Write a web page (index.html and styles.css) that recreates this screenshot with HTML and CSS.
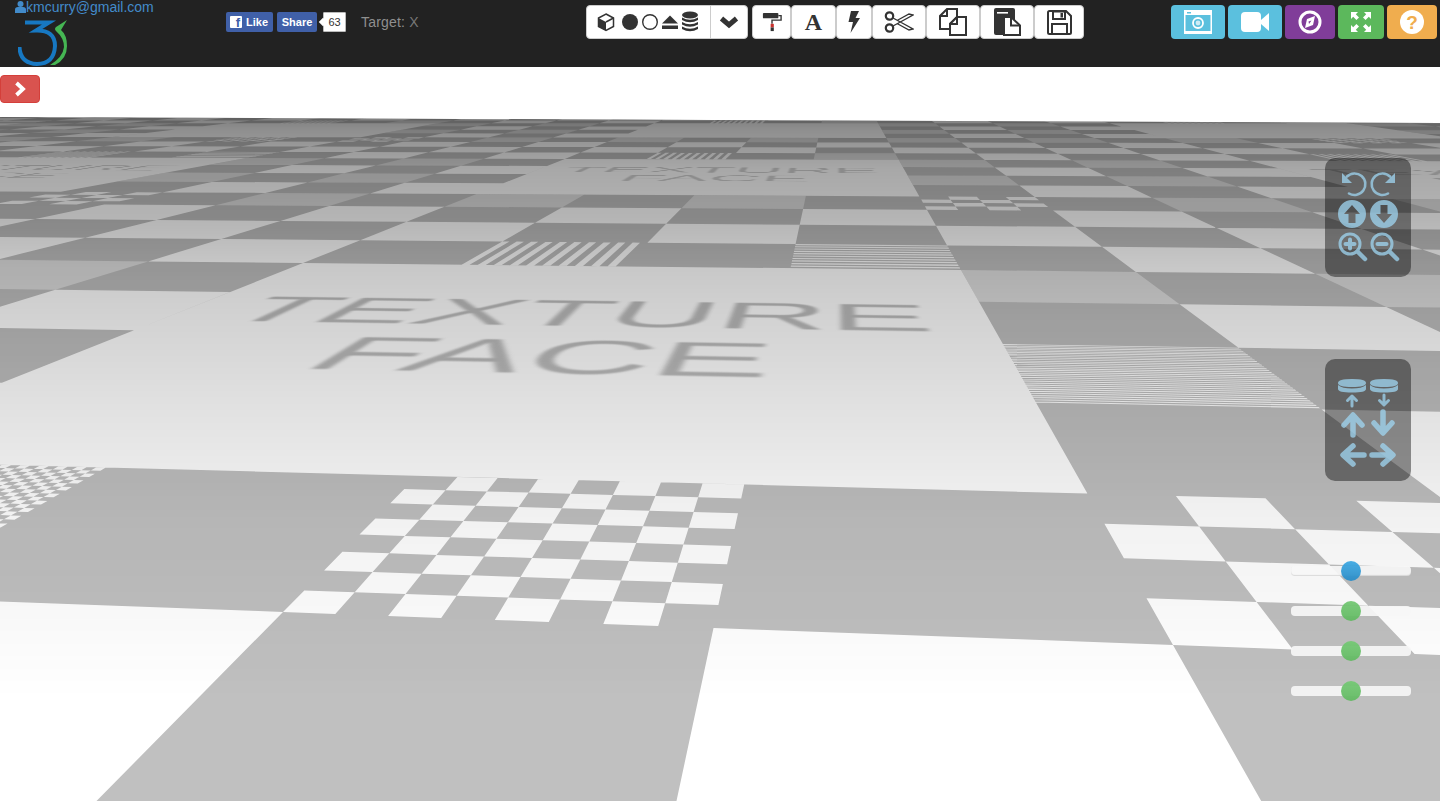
FILE: index.html
```html
<!DOCTYPE html>
<html>
<head>
    <title>Texture Face</title>
    <link rel="stylesheet" href="styles.css">
</head>
<body>
    <header class="topbar">
        <div class="user">
            <a class="email">
                <svg class="person" width="11" height="12" viewBox="0 0 11 12"><circle cx="5.5" cy="3" r="3"/><path d="M0 12V8.5Q0 6 3 6H8Q11 6 11 8.5V12Z"/></svg>kmcurry@gmail.com
            </a>
            <svg class="logo" width="52" height="46" viewBox="0 0 52 46">
                <path d="M7 2.500H31L18 10.500Q37 10 37 26Q36 44 19 44Q2 43 1.500 27" fill="none" stroke="#1778c2" stroke-width="4"/>
                <path d="M49 0L38 7Q36 9 38 11Q46 18 46 27Q45 37 32 45L37 45Q49 39 49 26Q49 15 43 10Z" fill="#45b653"/>
            </svg>
        </div>
        <div class="fb">
            <span class="fb-btn like"><span class="f-logo">f</span>Like</span>
            <span class="fb-btn share">Share</span>
            <span class="fb-count">63</span>
        </div>
        <div class="target">Target: <span>X</span></div>

        <div class="toolbar">
            <div class="tool-group">
                <div class="tool shapes">
                    <svg width="20" height="20" viewBox="0 0 20 20"><path d="M10 2L17.5 6V14.5L10 18.5L2.500 14.5V6Z" fill="none" stroke="#333" stroke-width="1.500"/><path d="M2.500 6L10 10V18.500L2.500 14.5Z" fill="#333"/><path d="M10 10L17.500 6" stroke="#333" stroke-width="1.500"/></svg>
                    <svg class="after-cube" width="20" height="20" viewBox="0 0 20 20"><circle cx="10" cy="10" r="8" fill="#333"/></svg>
                    <svg width="20" height="20" viewBox="0 0 20 20"><circle cx="10" cy="10" r="7.300" fill="none" stroke="#333" stroke-width="1.400"/></svg>
                    <svg width="20" height="20" viewBox="0 0 20 20"><path d="M10 3.500L18 11.500H2Z" fill="#333"/><rect x="2" y="13.500" width="16" height="3.500" fill="#333"/></svg>
                    <svg width="20" height="22" viewBox="0 0 20 22"><ellipse cx="10" cy="4" rx="8" ry="3.500" fill="#333"/><path d="M2 6.500Q10 11 18 6.500V9Q10 13.500 2 9ZM2 11Q10 15.500 18 11V13.500Q10 18 2 13.500ZM2 15.500Q10 20 18 15.500V18Q10 22.500 2 18Z" fill="#333"/></svg>
                </div>
                <div class="tool chevron">
                    <svg width="20" height="14" viewBox="0 0 20 14"><path d="M2.500 3.500L10 10L17.500 3.500" fill="none" stroke="#333" stroke-width="5"/></svg>
                </div>
            </div>
            <div class="tool w-brush">
                <svg width="20" height="20" viewBox="0 0 22 22"><rect x="1" y="1" width="17" height="6" rx="1" fill="#333"/><path d="M18 4H21V9H11V13" fill="none" stroke="#333" stroke-width="1.500"/><rect x="9.500" y="13" width="3.500" height="4" fill="#c9302c"/><rect x="9.500" y="17" width="3.500" height="4" fill="#333"/></svg>
            </div>
            <div class="tool w-font"><span class="letter">A</span></div>
            <div class="tool w-bolt">
                <svg width="14" height="22" viewBox="0 0 14 22"><path d="M4 0H12L8.500 7H13L3.500 22L6 11H1.500Z" fill="#333"/></svg>
            </div>
            <div class="tool w-wide">
                <svg width="30" height="22" viewBox="0 0 30 22"><circle cx="5.500" cy="5" r="3.700" fill="none" stroke="#333" stroke-width="2.200"/><circle cx="5.500" cy="17" r="3.700" fill="none" stroke="#333" stroke-width="2.200"/><path d="M9 7L29 18L25 19L13 12.500M9 15L29 4L25 3L13 9.500" fill="#fff" stroke="#333" stroke-width="1.300"/></svg>
            </div>
            <div class="tool w-wide">
                <svg width="28" height="28" viewBox="0 0 28 28"><path d="M8 1H18V9H18L11 16V21H1V8ZM8 1V8H1" fill="none" stroke="#333" stroke-width="2"/><path d="M18 9H27V27H11V16ZM18 9V16H11" fill="#fff" stroke="#333" stroke-width="2"/></svg>
            </div>
            <div class="tool w-wide">
                <svg width="28" height="28" viewBox="0 0 28 28"><path d="M1 2Q1 0 3 0H20Q22 0 22 2V27H3Q1 27 1 25Z" fill="#333"/><rect x="4" y="4" width="11" height="1.600" fill="#fff"/><path d="M18 9L27 17.500V27H11V9Z" fill="#fff" stroke="#333" stroke-width="2"/><path d="M18 9V17.500H27" fill="none" stroke="#333" stroke-width="2"/></svg>
            </div>
            <div class="tool w-last">
                <svg width="25" height="25" viewBox="0 0 25 25"><path d="M2.500 1H19L24 6V22.500Q24 24 22.500 24H2.500Q1 24 1 22.500V2.500Q1 1 2.500 1Z" fill="none" stroke="#333" stroke-width="2"/><path d="M6 1.500H18V9H6Z" fill="none" stroke="#333" stroke-width="2"/><rect x="13.500" y="3" width="2.500" height="4.500" fill="#333"/><path d="M5 23.500V14H20V23.500" fill="none" stroke="#333" stroke-width="2"/></svg>
            </div>
        </div>

        <div class="views">
            <div class="view w-54 info">
                <svg width="28" height="24" viewBox="0 0 28 24"><path d="M0 0H28V24H0ZM1.500 5V20H26.500V5Z" fill="#fff" fill-rule="evenodd"/><rect x="3" y="2" width="4" height="1.500" fill="#5bc0de"/><rect x="1.500" y="20" width="25" height="1" fill="#5bc0de"/><circle cx="14" cy="13" r="5" fill="none" stroke="#fff" stroke-width="1.800"/><circle cx="14" cy="13" r="2.400" fill="#fff" opacity=".7"/></svg>
            </div>
            <div class="view w-54 info">
                <svg width="28" height="20" viewBox="0 0 28 20"><rect x="0" y="0" width="20" height="20" rx="4" fill="#fff"/><path d="M20 8L28 1V19L20 12Z" fill="#fff"/></svg>
            </div>
            <div class="view w-50 purple">
                <svg width="24" height="24" viewBox="0 0 24 24"><circle cx="12" cy="12" r="10" fill="none" stroke="#fff" stroke-width="3"/><path d="M17 6L15 15L7 18L9 9Z" fill="#fff"/><path d="M13.500 10.500L11 14L10.500 11.500Z" fill="#803d99"/></svg>
            </div>
            <div class="view w-46 green">
                <svg width="22" height="22" viewBox="0 0 22 22"><path d="M1 1H8L5.800 3.200L9 6.400L6.400 9L3.200 5.800L1 8ZM21 1V8L18.800 5.800L15.600 9L13 6.400L16.200 3.200L14 1ZM21 21H14L16.200 18.800L13 15.600L15.600 13L18.800 16.200L21 14ZM1 21V14L3.200 16.200L6.400 13L9 15.600L5.800 18.800L8 21Z" fill="#fff"/></svg>
            </div>
            <div class="view w-50 orange">
                <svg width="24" height="24" viewBox="0 0 24 24"><circle cx="12" cy="12" r="12" fill="#fff"/><text x="12" y="18.500" text-anchor="middle" class="qmark">?</text></svg>
            </div>
        </div>
    </header>

    <main class="stage">
        <div class="floor" id="floor">
            <svg class="tiles" id="tiles" width="1440" height="734"></svg>
            <div class="shade"></div>
        </div>

        <button class="toggle" type="button">
            <svg width="14" height="16" viewBox="0 0 14 16"><path d="M3.500 2L10 8L3.500 14" fill="none" stroke="#fff" stroke-width="3.800"/></svg>
        </button>

        <div class="panel panel-view">
            <svg viewBox="0 0 32 32"><g class="ln"><path d="M11 9.500A10.800 10.800 0 1 1 13 26.500" stroke-width="2.600"/></g><path class="fl" d="M6 6V16H16Z"/></svg>
            <svg viewBox="0 0 32 32"><g transform="translate(33 0) scale(-1 1)"><g class="ln"><path d="M11 9.500A10.800 10.800 0 1 1 13 26.500" stroke-width="2.600"/></g><path class="fl" d="M6 6V16H16Z"/></g></svg>
            <svg viewBox="0 0 32 32"><path class="fl" fill-rule="evenodd" d="M2 15a14 14 0 1 0 28 0a14 14 0 1 0-28 0ZM16 6L24 15H19.500V24H12.500V15H8Z"/></svg>
            <svg viewBox="0 0 32 32"><path class="fl" fill-rule="evenodd" d="M2 15a14 14 0 1 0 28 0a14 14 0 1 0-28 0ZM16 24L24 15H19.500V6H12.500V15H8Z"/></svg>
            <svg viewBox="0 0 32 32"><g class="ln"><circle cx="14" cy="13" r="10" stroke-width="3"/><path d="M21.500 20.500L29 28" stroke-width="4.500"/><path d="M9.500 13H18.500M14 8.500V17.500" stroke-width="4"/></g></svg>
            <svg viewBox="0 0 32 32"><g class="ln"><circle cx="14" cy="13" r="10" stroke-width="3"/><path d="M21.500 20.500L29 28" stroke-width="4.500"/><path d="M9.500 13H18.500" stroke-width="4"/></g></svg>
        </div>

        <div class="panel panel-move">
            <svg viewBox="0 0 32 32"><path class="fl" d="M2 6Q2 2 16 2Q30 2 30 6Q30 10 16 10Q2 10 2 6ZM2 8Q6 11.500 16 11.500Q26 11.500 30 8V12Q30 15.500 16 15.500Q2 15.500 2 12Z"/><g class="ln"><path d="M16 29V20M11.500 23.500L16 19L20.500 23.500" stroke-width="3"/></g></svg>
            <svg viewBox="0 0 32 32"><path class="fl" d="M2 6Q2 2 16 2Q30 2 30 6Q30 10 16 10Q2 10 2 6ZM2 8Q6 11.500 16 11.500Q26 11.500 30 8V12Q30 15.500 16 15.500Q2 15.500 2 12Z"/><g class="ln"><path d="M16 18V27M11.500 23.500L16 28L20.500 23.500" stroke-width="3"/></g></svg>
            <svg viewBox="0 0 32 32"><g class="ln"><path d="M17 27V8M8 17L17 7L26 17" stroke-width="5.500"/></g></svg>
            <svg viewBox="0 0 32 32"><g class="ln"><path d="M15 4V24M6 15L15 25L24 15" stroke-width="5.500"/></g></svg>
            <svg viewBox="0 0 32 32"><g class="ln"><path d="M28 16H8M17 7L7 16L17 25" stroke-width="5.500"/></g></svg>
            <svg viewBox="0 0 32 32"><g class="ln"><path d="M4 16H24M15 7L25 16L15 25" stroke-width="5.500"/></g></svg>
        </div>

        <div class="sliders">
            <div class="slider first"><span class="thumb blue"></span></div>
            <div class="slider"><span class="thumb"></span></div>
            <div class="slider"><span class="thumb"></span></div>
            <div class="slider"><span class="thumb"></span></div>
        </div>
    </main>

    <script src="floor.js"></script>
</body>
</html>
```

FILE: styles.css
```css
* {
    box-sizing: border-box;
}

body {
    margin: 0;
    height: 801px;
    overflow: hidden;
    background-color: #fff;
    font-family: "Liberation Sans", Arial, sans-serif;
    font-size: 14px;
}

.topbar {
    display: flex;
    align-items: flex-start;
    height: 67px;
    padding-left: 15px;
    background-color: #222;
}

.user {
    display: flex;
    flex-direction: column;
    width: 211px;
}

.email {
    display: block;
    height: 14px;
    line-height: 14px;
    color: #428bca;
    white-space: nowrap;
}

.person {
    fill: #428bca;
    vertical-align: -1px;
}

.logo {
    margin: 6px 0 0 3px;
}

.fb {
    display: flex;
    margin-top: 12px;
}

.fb-btn {
    display: flex;
    align-items: center;
    height: 20px;
    border-radius: 2px;
    background-color: #4060a8;
    color: #fff;
    font-size: 11px;
    font-weight: bold;
}

.like {
    width: 47px;
    padding-left: 4px;
}

.f-logo {
    width: 12px;
    height: 12px;
    margin-right: 4px;
    border-radius: 1px;
    background-color: #fff;
    color: #4060a8;
    font-size: 13px;
    line-height: 14px;
    text-align: right;
    padding-right: 2px;
}

.share {
    width: 40px;
    margin-left: 4px;
    justify-content: center;
}

.fb-count {
    position: relative;
    width: 23px;
    height: 20px;
    margin-left: 6px;
    border: 1px solid #bbb;
    border-radius: 1px;
    background-color: #fff;
    color: #333;
    font-size: 11px;
    line-height: 18px;
    text-align: center;
}

.fb-count::before {
    content: "";
    position: absolute;
    left: -4px;
    top: 6px;
    width: 6px;
    height: 6px;
    background-color: #fff;
    transform: rotate(45deg);
}

.target {
    width: 225px;
    margin: 14px 0 0 15px;
    line-height: 16px;
    letter-spacing: 0.2px;
    color: #8f8f8f;
}

.target span {
    color: #777;
}

.toolbar {
    display: flex;
    margin-top: 5px;
}

.tool-group {
    display: flex;
    margin-right: 4px;
}

.tool {
    display: flex;
    align-items: center;
    justify-content: center;
    height: 34px;
    border: 1px solid #ccc;
    border-radius: 4px;
    background-color: #fff;
}

.shapes {
    width: 125px;
    justify-content: flex-start;
    padding-left: 9px;
    border-radius: 4px 0 0 4px;
}

.after-cube {
    margin-left: 4px;
}

.chevron {
    width: 38px;
    margin-left: -1px;
    border-radius: 0 4px 4px 0;
}

.w-brush {
    width: 39px;
}

.w-font {
    width: 45px;
}

.w-bolt {
    width: 36px;
}

.w-wide {
    width: 54px;
}

.w-last {
    width: 50px;
}

.letter {
    font-family: "Liberation Serif", serif;
    font-size: 24px;
    font-weight: bold;
    line-height: 30px;
    color: #333;
}

.views {
    display: flex;
    gap: 3px;
    margin: 5px 3px 0 auto;
}

.view {
    display: flex;
    align-items: center;
    justify-content: center;
    height: 34px;
    border-radius: 4px;
}

.w-54 {
    width: 54px;
}

.w-50 {
    width: 50px;
}

.w-46 {
    width: 46px;
}

.info {
    background-color: #5bc0de;
}

.purple {
    background-color: #803d99;
}

.green {
    background-color: #5cb85c;
}

.orange {
    background-color: #f0ad4e;
}

.qmark {
    font-family: "Liberation Sans", Arial, sans-serif;
    font-size: 19px;
    font-weight: bold;
    fill: #f0ad4e;
}

.stage {
    position: relative;
    height: 734px;
    overflow: hidden;
    background-color: #fff;
}

.floor {
    position: absolute;
    inset: 0;
    overflow: hidden;
    background-color: #c0c0c0;
    clip-path: polygon(0 50px, 100% 56px, 100% 100%, 0 100%);
}

.tiles {
    display: block;
    filter: blur(0.6px);
}

.face-label {
    position: absolute;
    left: 0;
    top: 0;
    width: 400px;
    height: 400px;
    padding-top: 97px;
    transform-origin: 0 0;
    font-size: 74px;
    line-height: 94px;
    text-align: center;
    color: #bdbdbd;
    filter: blur(1px);
}

.face-label.far {
    color: #d2d2d2;
}

.face-label span {
    display: block;
    white-space: nowrap;
    transform: scaleY(1.25);
}

.face-label span:last-child {
    transform: translateX(4px) scaleY(1.2);
}

.shade {
    position: absolute;
    inset: 0;
    background: linear-gradient(to bottom,
        rgba(0, 0, 0, 0.5) 6.9%,
        rgba(0, 0, 0, 0.44) 8.6%,
        rgba(0, 0, 0, 0.34) 14%,
        rgba(0, 0, 0, 0.29) 20.8%,
        rgba(0, 0, 0, 0.22) 27%,
        rgba(0, 0, 0, 0.19) 31.7%,
        rgba(0, 0, 0, 0.12) 45.4%,
        rgba(0, 0, 0, 0.085) 53.5%,
        rgba(0, 0, 0, 0.05) 61.7%,
        rgba(0, 0, 0, 0.03) 72.6%,
        rgba(0, 0, 0, 0) 86.2%);
}

.toggle {
    position: absolute;
    left: 0;
    top: 8px;
    display: flex;
    align-items: center;
    justify-content: center;
    width: 40px;
    height: 28px;
    padding: 0;
    border: 1px solid #d43f3a;
    border-radius: 4px;
    background-color: #d9534f;
}

.panel {
    position: absolute;
    left: 1325px;
    display: grid;
    grid-template-columns: 32px 32px;
    width: 86px;
    padding: 9px 11px 0;
    border-radius: 10px;
    background-color: rgba(0, 0, 0, 0.42);
}

.panel svg {
    display: block;
    width: 32px;
    height: 32px;
}

.panel-view {
    top: 91px;
    height: 119px;
    grid-auto-rows: 32px;
}

.panel-move {
    top: 292px;
    height: 122px;
    padding-top: 18px;
    grid-auto-rows: 31px;
}

.fl {
    fill: #9fd6f2;
    opacity: 0.75;
}

.ln {
    fill: none;
    stroke: #9fd6f2;
    stroke-linecap: round;
    stroke-linejoin: round;
    opacity: 0.75;
}

.sliders {
    position: absolute;
    left: 1291px;
    top: 499px;
    display: flex;
    flex-direction: column;
    gap: 30px;
    width: 120px;
}

.slider {
    display: flex;
    justify-content: center;
    height: 10px;
    border-radius: 4px;
    background-color: rgba(246, 246, 246, 0.92);
}

.slider.first {
    box-shadow: inset 0 -1px 1px rgba(0, 0, 0, 0.12);
}

.thumb {
    width: 20px;
    height: 20px;
    margin-top: -5px;
    border-radius: 50%;
    background-image: linear-gradient(to bottom, #74c874, #62b962);
    opacity: 0.95;
}

.thumb.blue {
    background-image: linear-gradient(to bottom, #3fa9e3, #2b8cc6);
}
```

FILE: floor.js
```js
// floor grid -> screen. corners read off the screenshot (y is relative to the stage)
const corners = [
    [-2, -4, 303, 196],
    [2, -4, 961, 203],
    [2, 1, 1173, 578],
    [0, 1, 283, 545]
];

function solveHomography(pts) {
    const m = [];
    pts.forEach(([u, v, x, y]) => {
        m.push([u, v, 1, 0, 0, 0, -u * x, -v * x, x]);
        m.push([0, 0, 0, u, v, 1, -u * y, -v * y, y]);
    });
    for (let i = 0; i < 8; i++) {
        let best = i;
        for (let r = i + 1; r < 8; r++) {
            if (Math.abs(m[r][i]) > Math.abs(m[best][i])) best = r;
        }
        [m[i], m[best]] = [m[best], m[i]];
        for (let r = 0; r < 8; r++) {
            if (r === i) continue;
            const k = m[r][i] / m[i][i];
            for (let c = i; c < 9; c++) m[r][c] -= k * m[i][c];
        }
    }
    return m.map((row, i) => row[8] / row[i]);
}

const h = solveHomography(corners);

function project(u, v) {
    const w = h[6] * u + h[7] * v + 1;
    return [(h[0] * u + h[1] * v + h[2]) / w, (h[3] * u + h[4] * v + h[5]) / w];
}

function quad(u0, v0, u1, v1) {
    const p = [project(u0, v0), project(u1, v0), project(u1, v1), project(u0, v1)];
    return 'M' + p.map(q => q[0].toFixed(1) + ' ' + q[1].toFixed(1)).join('L') + 'Z';
}

function mod8(n) {
    return ((n % 8) + 8) % 8;
}

// the 8x8 texture, as pattern names. keyed by column (u + 2) and row (v + 4)
function cellPattern(U, V) {
    if (V === 4) return { 0: 'check32', 2: 'check8', 4: 'check4', 6: 'mid' }[U] || null;
    if (V === 7 && U === 1) return 'vstripe10';
    if (V === 7 && U === 3) return 'hstripe10';
    if (U === 4 && V === 0) return 'mid';
    if (U === 4 && V === 2) return 'hstripe32';
    if (U === 6 && V === 0) return 'mid';
    if (U === 6 && V === 2) return 'mid';
    return (U + V) % 2 === 0 ? 'light' : null;
}

function cellSize(u, v, n) {
    const a = project(u + 0.5, v + 0.5);
    const b = project(u + 0.5 + 1 / n, v + 0.5);
    const c = project(u + 0.5, v + 0.5 + 1 / n);
    return [Math.hypot(a[0] - b[0], a[1] - b[1]), Math.hypot(a[0] - c[0], a[1] - c[1])];
}

let lightPath = '';
let midPath = '';

function drawCell(u, v, name) {
    if (name === 'light') {
        lightPath += quad(u, v, u + 1, v + 1);
        return;
    }
    if (name === 'mid') {
        midPath += quad(u, v, u + 1, v + 1);
        return;
    }
    const n = parseInt(name.replace(/\D/g, ''));
    if (name.startsWith('check')) {
        const size = cellSize(u, v, n);
        if (size[0] < 3 || size[1] < 2.5) {
            midPath += quad(u, v, u + 1, v + 1);
            return;
        }
        for (let r = 0; r < n; r++) {
            for (let c = 0; c < n; c++) {
                if ((r + c) % 2 === 1) lightPath += quad(u + c / n, v + r / n, u + (c + 1) / n, v + (r + 1) / n);
            }
        }
    } else if (name.startsWith('vstripe')) {
        if (cellSize(u, v, n * 2)[0] < 2) {
            midPath += quad(u, v, u + 1, v + 1);
            return;
        }
        for (let i = 0; i < n; i++) lightPath += quad(u + i / n, v, u + (i + 0.5) / n, v + 1);
    } else {
        if (cellSize(u, v, n * 2)[1] < 0.9) {
            midPath += quad(u, v, u + 1, v + 1);
            return;
        }
        for (let i = 0; i < n; i++) lightPath += quad(u, v + i / n, u + 1, v + (i + 0.5) / n);
    }
}

function addLabel(u0, v0) {
    const s = 0.01;
    const m = [
        h[0] * s, h[3] * s, 0, h[6] * s,
        h[1] * s, h[4] * s, 0, h[7] * s,
        0, 0, 1, 0,
        h[0] * u0 + h[1] * v0 + h[2], h[3] * u0 + h[4] * v0 + h[5], 0, h[6] * u0 + h[7] * v0 + 1
    ];
    const label = document.createElement('div');
    label.className = v0 < -4 ? 'face-label far' : 'face-label';
    label.style.transform = 'matrix3d(' + m.join(',') + ')';
    label.innerHTML = '<span>TEXTURE</span><span>FACE</span>';
    document.getElementById('floor').insertBefore(label, document.querySelector('.shade'));
}

for (let v = -30; v <= 1; v++) {
    for (let u = -34; u <= 34; u++) {
        const U = mod8(u + 2);
        const V = mod8(v + 4);
        if (U < 4 && V < 4) {
            if (U === 0 && V === 0) {
                lightPath += quad(u, v, u + 4, v + 4);
                // only the near two rows of labels can be read at all
                if (v === -4 && u === -2) addLabel(u, v);
                if (v === -12 && u >= -10 && u <= 6) addLabel(u, v);
            }
            continue;
        }
        const corner = project(u, v);
        if (corner[0] < -900 || corner[0] > 2400) continue;
        const name = cellPattern(U, V);
        if (name) drawCell(u, v, name);
    }
}

document.getElementById('tiles').innerHTML =
    '<path fill="#dfdfdf" d="' + midPath + '"/><path fill="#fff" d="' + lightPath + '"/>';
```
